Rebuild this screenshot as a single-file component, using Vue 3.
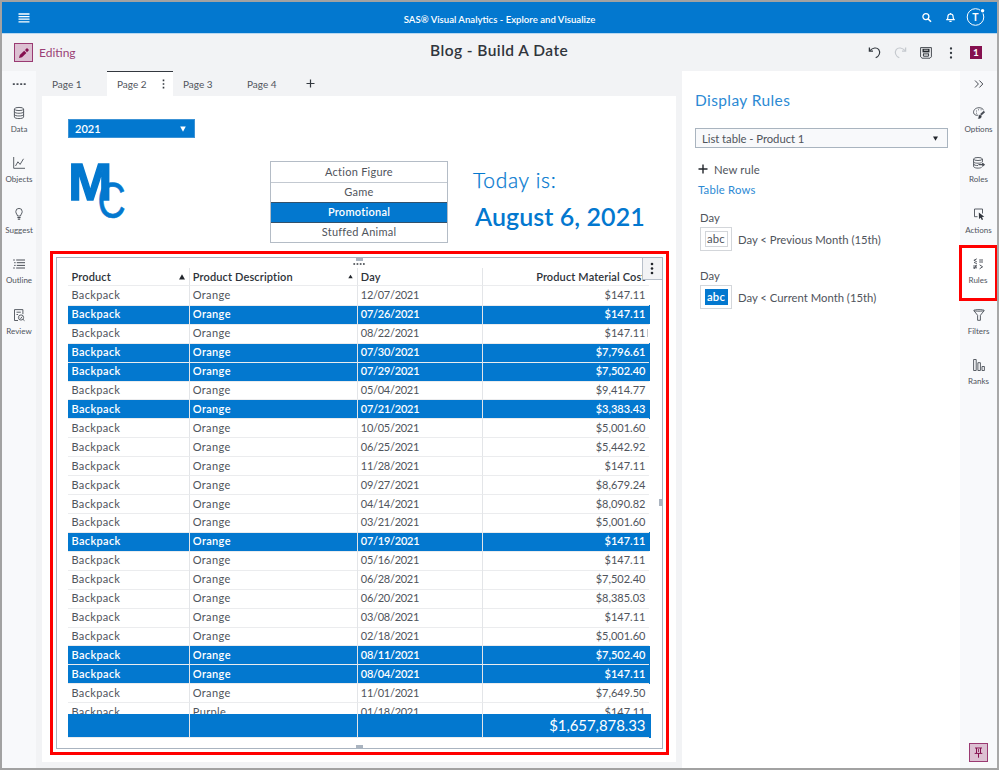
<script setup>
const leftItems = ['Data', 'Objects', 'Suggest', 'Outline', 'Review']
const rightItems = ['Options', 'Roles', 'Actions', 'Rules', 'Filters', 'Ranks']
const categories = ['Action Figure', 'Game', 'Promotional', 'Stuffed Animal']
const rules = [
  { field: 'Day', text: 'Day < Previous Month (15th)', filled: false },
  { field: 'Day', text: 'Day < Current Month (15th)', filled: true },
]
const rows = [
  ['12/07/2021', '$147.11'],
  ['07/26/2021', '$147.11', true],
  ['08/22/2021', '$147.11'],
  ['07/30/2021', '$7,796.61', true],
  ['07/29/2021', '$7,502.40', true],
  ['05/04/2021', '$9,414.77'],
  ['07/21/2021', '$3,383.43', true],
  ['10/05/2021', '$5,001.60'],
  ['06/25/2021', '$5,442.92'],
  ['11/28/2021', '$147.11'],
  ['09/27/2021', '$8,679.24'],
  ['04/14/2021', '$8,090.82'],
  ['03/21/2021', '$5,001.60'],
  ['07/19/2021', '$147.11', true],
  ['05/16/2021', '$147.11'],
  ['06/28/2021', '$7,502.40'],
  ['06/20/2021', '$8,385.03'],
  ['03/08/2021', '$147.11'],
  ['02/18/2021', '$5,001.60'],
  ['08/11/2021', '$7,502.40', true],
  ['08/04/2021', '$147.11', true],
  ['11/01/2021', '$7,649.50'],
  ['01/18/2021', '$147.11', false, 'Purple'],
].map(([day, cost, hit = false, desc = 'Orange']) => ({ day, cost, hit, desc }))
</script>

<template>
  <div class="app">
    <header class="banner">
      <svg class="burger" width="12" height="10" viewBox="0 0 12 10"><path d="M.5 1h11M.5 3.6h11M.5 6.2h11M.5 8.8h11" stroke="#fff" stroke-width="1.3" /></svg>
      <span class="banner-title">SAS® Visual Analytics - Explore and Visualize</span>
      <div class="banner-icons">
        <svg width="11" height="11" viewBox="0 0 11 11" fill="none" stroke="#fff"><circle cx="4.9" cy="4.6" r="3" stroke-width="1.3" /><path d="M7.2 7l2.8 2.8" stroke-width="1.6" /></svg>
        <svg class="bell" width="11" height="11" viewBox="0 0 11 11" fill="none" stroke="#fff"><path d="M1.2 7.6h8.6M2.2 7.4C3 6.6 2.8 5.6 2.9 4.6a2.6 2.6 0 0 1 5.2 0c.1 1 0 2 .8 2.8" stroke-width="1.2" /><path d="M4.4 9.3h2.2M5.5 1v1.4" stroke-width="1.3" /></svg>
        <svg class="avatar" width="20" height="20" viewBox="0 0 20 20"><circle cx="9.5" cy="10" r="8.3" fill="none" stroke="#fff" stroke-width="1" /><text x="9.5" y="13.7" text-anchor="middle" fill="#fff" font-size="10.5" font-weight="700">T</text><circle cx="16.6" cy="3.8" r="2.6" fill="#0378cf" /><circle cx="16.6" cy="3.8" r="1.7" fill="#fff" /></svg>
      </div>
    </header>

    <div class="titlebar">
      <div class="edit-badge">
        <svg width="10" height="10" viewBox="0 0 10 10"><path d="M0 10l.8-3L5.2 2.8 7.4 5 3 9.2z" fill="#85104f" /><path d="M6 2L8 0 10 2 8 4.2z" fill="#85104f" /></svg>
      </div>
      <span class="editing">Editing</span>
      <span class="doc-title">Blog - Build A Date</span>
      <div class="tools">
        <svg width="13" height="13" viewBox="0 0 13 13" fill="none" stroke="#33383f"><path d="M2 4.6C4.5 1.8 8.8.9 10.8 3.6c1.9 2.9.6 6.3-3.1 8.2" stroke-width="1.1" /><path d="M1.4 1.5v3.6H5" stroke-width="1.3" /></svg>
        <svg width="13" height="13" viewBox="0 0 13 13" fill="none" stroke="#c5c9ce"><path d="M11 4.6C8.500 1.8 4.200.9 2.200 3.600c-1.900 2.900-.6 6.300 3.100 8.200" stroke-width="1.1" /><path d="M11.600 1.500v3.600H8" stroke-width="1.3" /></svg>
        <svg width="12" height="12" viewBox="0 0 12 12" fill="none" stroke="#33383f"><path d="M.6.6h10.8v9.2L10 11.2H2L.6 9.800z" stroke-width=".9" /><path d="M2.500 1.800h7v3.600h-7z" fill="#22262c" stroke="none" /><path d="M3 6.900h6M3.500 9.200h5M3.400 6.900v2.300M8.600 6.900v2.300" stroke-width="1" /><path d="M3.800 3.200h4.400" stroke="#fff" stroke-width=".8" /></svg>
        <svg width="4" height="12" viewBox="0 0 4 12" fill="#33383f"><circle cx="2" cy="1.5" r="1.15" /><circle cx="2" cy="6" r="1.15" /><circle cx="2" cy="10.5" r="1.15" /></svg>
        <span class="count">1</span>
      </div>
    </div>

    <div class="body">
      <nav class="rail left">
        <svg class="rail-top" width="14" height="12" viewBox="0 0 14 12" fill="#4a4f57"><path d="M.8 5.2h2v1.7h-2zM4.5 5.2h2v1.7h-2zM8.2 5.2h2v1.7h-2zM11.7 5.2h2v1.7h-2z" /></svg>
        <div v-for="name in leftItems" :key="name" class="rail-item">
          <svg width="12" height="12" viewBox="0 0 12 12" fill="none" stroke="#4a4f57" stroke-width=".9">
            <g v-if="name === 'Data'"><ellipse cx="6" cy="2" rx="4.6" ry="1.6" /><path d="M1.4 2v8c0 2.1 9.2 2.1 9.2 0V2M1.4 4.7c0 2.1 9.2 2.1 9.2 0M1.4 7.4c0 2.1 9.2 2.1 9.2 0" /></g>
            <path v-else-if="name === 'Objects'" d="M.7 0v11.3H12M2.5 9l2.4-4.2 2.2 2.6L10.5 1.8" />
            <g v-else-if="name === 'Suggest'"><path d="M4.5 8C4.5 6.6 2.8 5.6 2.8 3.6a3.2 3.2 0 0 1 6.4 0C9.2 5.6 7.5 6.6 7.5 8z" /><path d="M4.4 9.5h3.2M4.8 11.2h2.4" stroke-width="1.2" /></g>
            <path v-else-if="name === 'Outline'" d="M.2 2h1.600M3.200 2H12M1.200 4.700h1.400M3.800 4.700H12M1.200 7.400h1.400M3.800 7.400H12M.2 10h1.600M3.200 10H12" stroke-width="1" />
            <g v-else><path d="M5 11.5H1.5V.6h8.4v4.5M3.500 3.200h4.300M3.500 5.500h1.600" /><circle cx="8" cy="8.500" r="2.600" /><path d="M6.800 8.600l.9.9 1.500-1.800M10 10.400l1.500 1.300" /></g>
          </svg>
          <span>{{ name }}</span>
        </div>
      </nav>

      <main class="workspace">
        <div class="tabs">
          <span class="tab t1">Page 1</span>
          <span class="tab active">Page 2
            <svg width="3" height="10" viewBox="0 0 3 10" fill="#33383f"><path d="M.7.6h1.6v1.6H.7zM.7 4.2h1.6v1.6H.7zM.7 7.8h1.6v1.6H.7z" /></svg>
          </span>
          <span class="tab t3">Page 3</span>
          <span class="tab t4">Page 4</span>
          <svg class="add-tab" width="9" height="9" viewBox="0 0 9 9"><path d="M.5 4.500h8M4.500.5v8" stroke="#33383f" stroke-width="1.2" /></svg>
        </div>

        <section class="canvas">
          <div class="controls">
            <div class="brand">
              <div class="year"><span>2021</span><svg width="6" height="6" viewBox="0 0 6 6"><path d="M.2.5h5.6L3 5.7z" fill="#fff" /></svg></div>
              <svg class="logo" width="60" height="60" viewBox="0 0 60 60" fill="#0378cf">
                <text transform="translate(.2 38) scale(1.035 1)" font-family="Liberation Sans, sans-serif" font-weight="700" font-size="51" stroke="#0378cf" stroke-width="1.4">M</text>
                <text transform="translate(29.6 56.4) scale(.78 1)" font-family="Liberation Sans, sans-serif" font-size="50" stroke="#0378cf" stroke-width=".6">C</text>
              </svg>
            </div>
            <div class="categories">
              <div v-for="c in categories" :key="c" :class="{ chosen: c === 'Promotional' }">{{ c }}</div>
            </div>
            <div class="today">
              <div class="today-label">Today is:</div>
              <div class="today-date">August 6, 2021</div>
            </div>
          </div>

          <div class="highlight">
            <div class="object">
              <div class="grid-row head">
                <span>Product<svg width="6" height="6" viewBox="0 0 6 6"><path d="M0 5.5h6L3 .3z" fill="#22262c" /></svg></span>
                <span>Product Description<svg width="5" height="5" viewBox="0 0 6 6"><path d="M.3 5h5.4L3 .8z" fill="#22262c" /></svg></span>
                <span>Day</span>
                <span class="num">Product Material Cost</span>
              </div>
              <div class="rows">
                <div v-for="(r, i) in rows" :key="i" class="grid-row" :class="{ hit: r.hit }">
                  <span>Backpack</span><span>{{ r.desc }}</span><span class="date">{{ r.day }}</span><span class="num">{{ r.cost }}</span>
                </div>
              </div>
              <div class="grid-row total"><span></span><span></span><span></span><span class="num">$1,657,878.33</span></div>
              <i class="grip top"></i><i class="grip bottom"></i><i class="grip side"></i><i class="caret"></i>
              <svg class="drag" width="12" height="2" viewBox="0 0 12 2"><path d="M.4 1h1.7M3.6 1h1.7M6.8 1h1.7M10 1h1.7" stroke="#33383f" stroke-width="1.5" /></svg>
              <div class="menu"><svg width="4" height="13" viewBox="0 0 4 13" fill="#22262c"><circle cx="2" cy="2" r="1.3" /><circle cx="2" cy="6.5" r="1.3" /><circle cx="2" cy="11" r="1.3" /></svg></div>
            </div>
          </div>
        </section>
      </main>

      <aside class="panel">
        <h2>Display Rules</h2>
        <div class="select"><span>List table - Product 1</span><svg width="5" height="5" viewBox="0 0 6 6"><path d="M0 .5h6L3 5.8z" fill="#22262c" /></svg></div>
        <div class="new-rule"><svg width="10" height="10" viewBox="0 0 10 10"><path d="M.5 5h9M5 .5v9" stroke="#22262c" stroke-width="1.4" /></svg><span>New rule</span></div>
        <div class="link">Table Rows</div>
        <div v-for="r in rules" :key="r.text" class="rule">
          <div class="field">{{ r.field }}</div>
          <div class="rule-line"><div class="swatch"><b :class="{ filled: r.filled }">abc</b></div><span>{{ r.text }}</span></div>
        </div>
      </aside>

      <nav class="rail right">
        <svg class="rail-top" width="10" height="12" viewBox="0 0 10 12" fill="none" stroke="#33383f" stroke-width=".9"><path d="M1 2.5L4.4 6 1 9.5M5.4 2.5L8.8 6 5.4 9.5" /></svg>
        <div v-for="name in rightItems" :key="name" class="rail-item" :class="{ marked: name === 'Rules' }">
          <svg width="12" height="12" viewBox="0 0 12 12" fill="none" stroke="#4a4f57" stroke-width=".9">
            <g v-if="name === 'Options'"><path d="M5.200 8.200H3C-.4 7.200 0 3.400 2.500 1.700 5.300 0 9.500.5 10.600 3.300" /><path d="M3.200 4h.8M5.200 2.800h.8M7.700 2.800h.8M3 6.200h.8" stroke-width="1" /><path d="M11.400 4.500L7.800 7.800" stroke-width="1.900" /><path d="M5.300 11.400c2.200.3 3.500-.9 2.800-2.900L6.600 8c-1 .8-.3 2.300-1.300 3.400z" fill="#33383f" stroke-width=".6" /></g>
            <g v-else-if="name === 'Roles'"><ellipse cx="5" cy="2" rx="4.4" ry="1.5" /><path d="M.6 2v7.4c0 1.900 6 2.200 8 1M9.400 2v3M.6 4.600c0 1.800 5.800 2 8 1M.6 7c.2 1.200 2.400 1.600 4.400 1.500" /><path d="M5.500 7.700H11M9.200 6l2 1.700-2 1.700" stroke-width="1.2" /></g>
            <g v-else-if="name === 'Actions'"><path d="M4.500 8.700H1.500V1h8v4.500" /><path d="M5.800 4.600l5.500 4.200-2.300.3 1.100 2.300-1.300.6-1.100-2.300L6 11z" fill="#33383f" stroke="none" /></g>
            <path v-else-if="name === 'Rules'" d="M4.800.8L1.900 2.300l2.900 1.500M2 4.400l2.800 1.200M7.200 2h3.800M7.200 4h3.800M1.200 8h3.800M1.200 9.800h3.800M4.400 6.800l-2.400 4.200M7.600 6.800l3 2-3 2" stroke-width=".95" />
            <path v-else-if="name === 'Filters'" d="M.8 1.5c0-1.200 10.400-1.200 10.400 0L7.400 6.300v5H4.600v-5zM.8 1.500c1 .9 9.400.9 10.400 0" />
            <path v-else d="M.6.5h2.600v11H.6zM4.900 3.700h2.500v7.800H4.900zM9 7.500h2.400v4H9z" />
          </svg>
          <span>{{ name }}</span>
        </div>
        <div class="pin"><svg width="9" height="11" viewBox="0 0 9 11"><path d="M1 1h7M2.500 1v5M6.500 1v5M.7 6.400h7.600M4.500 6v4.700" fill="none" stroke="#85104f" stroke-width="1" /><path d="M4.500 2v3" stroke="#85104f" stroke-width=".8" /></svg></div>
      </nav>
    </div>
  </div>
</template>

<style>
body { margin: 0; background: #fff; }
</style>

<style scoped>
.app { box-sizing: border-box; width: 999px; height: 770px; border: 2px solid #a2a2a2; border-right-color: #a8a8a8; background: #f2f3f5; font-family: Lato, "Liberation Sans", sans-serif; color: #4f545c; font-size: 11px; overflow: hidden; display: flex; flex-direction: column; }
.app * { box-sizing: border-box; }
svg { display: block; flex: none; overflow: visible; }
span { white-space: nowrap; }
.banner { height: 32px; flex: none; background: #0378cf; border-bottom: 1px solid #b9d8f0; display: grid; grid-template-columns: 1fr auto 1fr; align-items: center; color: #fff; }
.burger { margin-left: 16px; margin-top: 1px; }
.banner-title { font-size: 9.6px; font-weight: 600; padding-top: 3px; }
.banner-icons { display: flex; align-items: center; justify-content: flex-end; gap: 13px; padding: 0 11px 1px 0; }
.avatar { margin-left: -3px; }
.titlebar { height: 37px; flex: none; display: flex; align-items: center; padding: 0 15px 0 12px; }
.edit-badge, .pin { width: 19px; height: 19px; border: 1px solid #9a3a72; background: #dcc0d2; display: flex; align-items: center; justify-content: center; }
.editing { width: 50px; margin-left: 6px; color: #9b3f76; font-size: 12px; padding-bottom: 1px; }
.doc-title { margin-left: 341px; font-size: 15.5px; font-weight: 600; letter-spacing: .45px; color: #30353c; padding-bottom: 5px; }
.tools { margin-left: auto; display: flex; align-items: center; gap: 13px; }
.tools svg:nth-child(4) { margin: 0 5px 0 4px; }
.count { width: 12px; height: 13px; background: #85104f; color: #fff; font: 700 10px/13px Lato, sans-serif; text-align: center; margin-left: -1px; }
.body { flex: 1; display: flex; min-height: 0; }
.rail { background: #f8f9fb; display: flex; flex-direction: column; align-items: center; }
.left { width: 34px; margin-right: 6px; }
.right { width: 37px; }
.rail-top { margin: 7px 0 6px; }
.rail-item { width: 100%; height: 50.4px; padding-top: 11px; display: flex; flex-direction: column; align-items: center; font-size: 8px; }
.rail-item span { margin-top: 6px; line-height: 9px; }
.rail .marked { width: 39px; height: 56px; margin: -2px 0 -3.6px -1px; padding-top: 10px; border: 3px solid #f00; background: #fff; }
.pin { margin-top: auto; margin-bottom: 6px; }
.workspace { width: 634px; padding-bottom: 6px; display: flex; flex-direction: column; }
.tabs { height: 25px; flex: none; display: flex; font-size: 10px; }
.tab { line-height: 26px; }
.t1 { width: 65px; padding-left: 10px; }
.active { width: 66px; background: #fff; border-top: 1px solid #33383f; padding: 0 8px 0 10px; display: flex; align-items: center; justify-content: space-between; }
.active { line-height: 24px; }
.t3 { width: 74px; padding-left: 10px; }
.t4 { width: 59px; }
.add-tab { margin: 8px 0 0; }
.canvas { flex: 1; background: #fff; }
.controls { height: 155px; padding: 23px 0 0 26px; display: flex; }
.brand { width: 202px; }
.year { width: 127px; height: 19px; background: #0378cf; border: 1px solid #3c93d6; color: #fff; display: flex; align-items: center; justify-content: space-between; padding: 0 8px 0 6px; font-weight: 600; font-size: 11px; }
.logo { margin-top: 24px; }
.categories { width: 178px; height: 82px; margin-top: 42px; border: 1px solid #b4bcc6; display: grid; grid-template-rows: repeat(4, 20px); font-size: 11px; line-height: 19px; text-align: center; letter-spacing: .25px; }
.categories div + div { border-top: 1px solid #c3c9d1; line-height: 18px; }
.categories .chosen { background: #0378cf; color: #fff; font-weight: 600; border-top-color: #33516b; box-shadow: 0 1px 0 #33516b; position: relative; }
.today { margin-left: 25px; padding-top: 46px; color: #0378cf; }
.today-label { font-size: 21px; line-height: 30px; letter-spacing: .7px; font-weight: 300; -webkit-text-stroke: .25px #0378cf; }
.today-date { font-size: 25px; line-height: 42px; font-weight: 600; padding-left: 2px; letter-spacing: .07px; }
.highlight { margin-left: 8px; width: 619px; height: 504px; border: 3px solid #f00; padding: 2.5px 3px 3px 2.5px; }
.object { position: relative; height: 100%; width: 607px; border: 1.5px solid #aab4c0; padding: 10px 0 0 11px; }
.grid-row { display: grid; grid-template-columns: 121.3px 168px 125px 167.7px; width: 582px; height: 18.93px; line-height: 18px; }
.grid-row span { padding: 0 4px; border-bottom: 1px solid #ebecee; min-width: 0; }
.grid-row span + span { border-left: 1px solid #e3e5e8; padding-left: 3px; }
.grid-row .num { text-align: right; }
.head { font-weight: 600; color: #2d3239; letter-spacing: .13px; }
.grid-row.head span { display: flex; align-items: center; justify-content: space-between; line-height: 16px; padding-top: 1px; }
.grid-row.head .num { justify-content: flex-end; }
.rows { height: 427.2px; overflow: hidden; letter-spacing: .35px; }
.rows .grid-row { line-height: 18.4px; }
.rows .date { letter-spacing: -.27px; }
.rows .num { letter-spacing: 0; }
.hit { background: #0378cf; color: #fff; font-weight: 600; }
.grid-row.total { height: 24px; width: 583px; background: #0378cf; color: #fff; font-size: 15px; line-height: 22px; letter-spacing: -.08px; }
.grip { position: absolute; background: #aab4c0; width: 7px; height: 4px; }
.grip.top { top: -1px; left: 299px; }
.grip.bottom { bottom: -1px; left: 299px; }
.grip.side { width: 4px; height: 7px; right: -1px; top: 241px; }
.caret { position: absolute; width: 1px; height: 8px; left: 590px; top: 71px; background: #c3c7cc; }
.drag { position: absolute; left: 296px; top: 5px; }
.menu { position: absolute; top: 0; right: 0; width: 20px; height: 22px; background: #f2f3f5; border: solid #b8c0ca; border-width: 0 0 1px 1px; display: flex; align-items: center; justify-content: center; }
.panel { width: 278px; margin-left: 6px; background: #fff; padding: 17px 13px; font-size: 11.3px; }
h2 { margin: 0; font-size: 15.5px; line-height: 24px; font-weight: 400; color: #2c8ad4; letter-spacing: .4px; }
.select { height: 20px; width: 253px; margin-top: 16px; border: 1px solid #a9b4bf; background: #f8f9fb; display: flex; align-items: center; justify-content: space-between; padding: 0 9px 0 6px; letter-spacing: -.05px; }
.new-rule { margin: 12px 0 0 3px; height: 18px; display: flex; align-items: center; gap: 6px; letter-spacing: .1px; }
.link { margin: 2px 0 0 3px; line-height: 20px; color: #2c8ad4; font-size: 11.3px; letter-spacing: .2px; }
.rule { margin: 9px 0 0 5px; height: 49px; }
.field { line-height: 18px; }
.rule-line { display: flex; align-items: center; gap: 6px; letter-spacing: 0; }
.swatch { width: 32px; height: 24px; border: 1px solid #d3d6da; display: flex; align-items: center; justify-content: center; }
.swatch b { width: 23px; height: 16px; border: 1px solid #d3d6da; font-weight: 400; line-height: 13px; text-align: center; letter-spacing: .2px; }
.swatch .filled { background: #0378cf; border-color: #0378cf; color: #fff; font-weight: 600; }
</style>
